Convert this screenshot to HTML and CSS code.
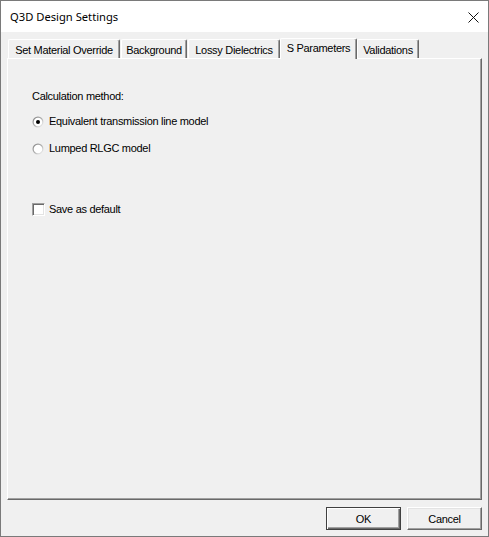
FILE: index.html
```html
<!DOCTYPE html>
<html>
<head>
<meta charset="utf-8">
<link rel="stylesheet" href="styles.css">
</head>
<body>
<div class="window">
  <div class="titlebar">
    <span class="title">Q3D Design Settings</span>
    <svg class="close" width="11" height="11" viewBox="0 0 11 11"><path d="M0.5 0.5L10.5 10.5M10.5 0.5L0.5 10.5" stroke="#111" stroke-width="1" fill="none"/></svg>
  </div>
  <div class="content">
    <div class="tabstrip">
      <div class="tab tab-material">Set Material Override</div>
      <div class="tab tab-background">Background</div>
      <div class="tab tab-lossy">Lossy Dielectrics</div>
      <div class="tab tab-sparams active">S Parameters</div>
      <div class="tab tab-valid">Validations</div>
    </div>
    <div class="pane">
      <div class="label">Calculation method:</div>
      <div class="option opt-first">
        <svg class="radio" width="12" height="12" viewBox="0 0 12 12">
          <defs>
            <linearGradient id="rg" x1="0" y1="0" x2="1" y2="1">
              <stop offset="0" stop-color="#808080"/>
              <stop offset="0.5" stop-color="#b0b0b0"/>
              <stop offset="1" stop-color="#ffffff"/>
            </linearGradient>
          </defs>
          <circle cx="6" cy="6" r="5.5" fill="url(#rg)"/>
          <circle cx="6" cy="6" r="4.3" fill="#fff"/>
          <circle cx="6" cy="6" r="2" fill="#000"/>
        </svg>
        <span>Equivalent transmission line model</span>
      </div>
      <div class="option opt-second">
        <svg class="radio" width="12" height="12" viewBox="0 0 12 12">
          <circle cx="6" cy="6" r="5.5" fill="url(#rg)"/>
          <circle cx="6" cy="6" r="4.3" fill="#fff"/>
        </svg>
        <span>Lumped RLGC model</span>
      </div>
      <div class="option opt-check">
        <span class="checkbox"></span>
        <span>Save as default</span>
      </div>
    </div>
    <div class="buttons">
      <div class="btn btn-default">OK</div>
      <div class="btn">Cancel</div>
    </div>
  </div>
</div>
</body>
</html>
```
FILE: styles.css
```css
html, body {
  margin: 0;
  padding: 0;
  background: #f0f0f0;
}
.window {
  width: 489px;
  height: 537px;
  box-sizing: border-box;
  border: 1px solid #7a7a7a;
  display: flex;
  flex-direction: column;
  font-family: "Liberation Sans", Arial, sans-serif;
  font-size: 11px;
  letter-spacing: -0.3px;
  color: #000;
}
.titlebar {
  height: 31px;
  background: #fff;
  display: flex;
  align-items: center;
  justify-content: space-between;
  padding-left: 9px;
  padding-right: 9px;
  flex-shrink: 0;
}
.title {
  font-family: "Noto Sans", "Open Sans", sans-serif;
  font-size: 11.2px;
  letter-spacing: 0;
  color: #000;
}
.close {
  display: block;
  margin-top: 1px;
}
.content {
  flex: 1;
  background: #f0f0f0;
  padding: 6px 6px 0 6px;
}
.tabstrip {
  height: 20px;
  display: flex;
  align-items: flex-end;
  gap: 1px;
  padding-left: 1px;
  position: relative;
  z-index: 1;
}
.tab {
  height: 19px;
  box-sizing: border-box;
  border-top: 1px solid #fff;
  border-left: 1px solid #fff;
  border-right: 1px solid #696969;
  box-shadow: inset -1px 0 #a0a0a0;
  border-radius: 2px 2px 0 0;
  text-align: center;
  line-height: 16px;
  padding-top: 2px;
  white-space: nowrap;
  background: #f0f0f0;
}
.tab-material { width: 112px; }
.tab-background { width: 66px; }
.tab-lossy { width: 92px; }
.tab-sparams { width: 77px; }
.tab-valid { width: 62px; }
.tab.active {
  height: 21px;
  margin: 0 -1px -1px -1px;
  padding-top: 1px;
}
.pane {
  height: 442px;
  box-sizing: border-box;
  border-top: 1px solid #fff;
  border-left: 1px solid #fff;
  border-right: 1px solid #696969;
  border-bottom: 1px solid #696969;
  box-shadow: inset -1px -1px #a0a0a0;
  padding: 31px 24px;
}
.label {
  line-height: 13px;
  height: 13px;
}
.option {
  display: flex;
  align-items: center;
  height: 13px;
  line-height: 13px;
}
.opt-first { margin-top: 12px; }
.opt-second { margin-top: 14px; }
.opt-check { margin-top: 48px; }
.radio {
  display: block;
  margin-right: 5px;
  flex-shrink: 0;
}
.checkbox {
  width: 13px;
  height: 13px;
  box-sizing: border-box;
  border: 1px solid;
  border-color: #a0a0a0 #fff #fff #a0a0a0;
  box-shadow: inset 1px 1px #696969, inset -1px -1px #e3e3e3;
  background: #fff;
  margin-right: 4px;
  flex-shrink: 0;
}
.buttons {
  display: flex;
  justify-content: flex-end;
  gap: 6px;
  margin-top: 7px;
}
.btn {
  width: 75px;
  height: 23px;
  box-sizing: border-box;
  border: 1px solid;
  border-color: #fff #696969 #696969 #fff;
  box-shadow: inset -1px -1px #a0a0a0, inset 1px 1px #e3e3e3;
  background: #f0f0f0;
  display: flex;
  align-items: center;
  justify-content: center;
}
.btn-default {
  border: 1px solid #404040;
  box-shadow: inset 1px 1px #fff, inset -1px -1px #696969, inset -2px -2px #a0a0a0;
}
```
